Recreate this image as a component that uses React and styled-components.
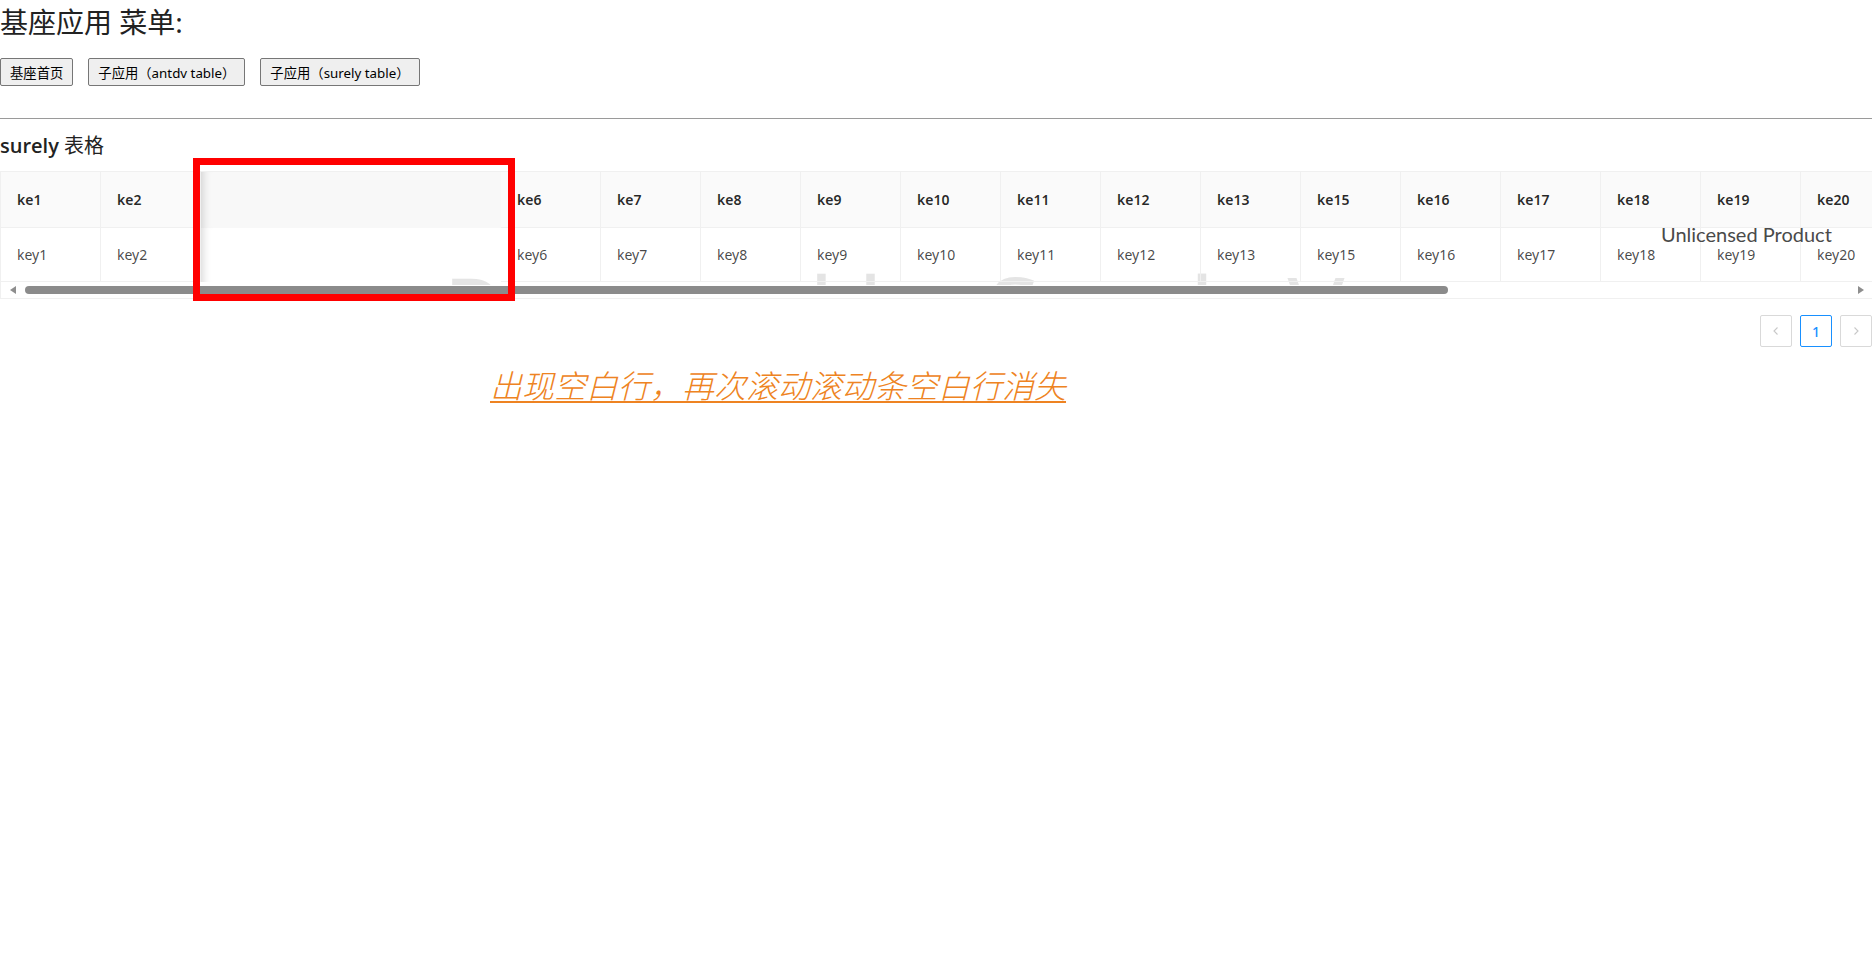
import React from "react";
import styled, { createGlobalStyle } from "styled-components";

const GlobalStyle = createGlobalStyle`
  html, body { margin: 0; padding: 0; background: #fff; }
  body {
    font-family: "Noto Sans", "Noto Sans CJK SC", sans-serif;
    color: #222;
  }
`;

const Page = styled.div`
  position: relative;
  width: 1872px;
  min-height: 958px;
  overflow: hidden;
`;

const Title = styled.h1`
  margin: 0;
  height: 44px;
  font-size: 28px;
  line-height: 44px;
  font-weight: 400;
  color: #222;
  font-family: "Noto Sans", "Noto Sans CJK SC", sans-serif;
`;

const Nav = styled.div`
  display: flex;
  gap: 15px;
  margin-top: 14px;
`;

const NavButton = styled.button`
  height: 28px;
  padding: 0 9px;
  border: 1px solid #767676;
  border-radius: 2px;
  background: #efefef;
  color: #000;
  font-size: 13.33px;
  font-family: "Noto Sans", "Noto Sans CJK SC", sans-serif;
  cursor: pointer;
`;

const Divider = styled.hr`
  margin: 32px 0 0;
  border: 0;
  border-top: 1px solid #9a9a9a;
  height: 0;
`;

const SectionTitle = styled.h3`
  margin: 13px 0 11px;
  height: 28px;
  font-size: 20px;
  line-height: 28px;
  font-weight: 600;
  color: #222;
  font-family: "Open Sans", "Noto Sans CJK SC", sans-serif;
`;

const Plain = styled.span`
  font-weight: 400;
`;

const TableWrap = styled.div`
  position: relative;
  border: 1px solid #f0f0f0;
  border-right: 0;
  overflow: hidden;
`;

const Watermark = styled.div`
  position: absolute;
  left: 442px;
  top: 90px;
  font-size: 95px;
  line-height: 1;
  white-space: nowrap;
  color: #e4e4e4;
  font-family: "Noto Sans", sans-serif;
  z-index: 0;
  pointer-events: none;
`;

const Row = styled.div`
  position: relative;
  z-index: 1;
  display: grid;
  grid-template-columns: 100px 100px 300px repeat(14, 100px);
  width: max-content;
`;

const Cell = styled.div`
  box-sizing: border-box;
  display: flex;
  align-items: center;
  padding: 0 16px;
  height: ${(p) => (p.$head ? "56px" : "54px")};
  background: ${(p) => (p.$head ? "#fafafa" : "transparent")};
  border-right: 1px solid #f0f0f0;
  border-bottom: 1px solid #f0f0f0;
  font-size: 14px;
  font-weight: ${(p) => (p.$head ? 600 : 400)};
  color: ${(p) => (p.$head ? "rgba(0,0,0,0.85)" : "rgba(0,0,0,0.72)")};
  white-space: nowrap;
`;

const GapCell = styled.div`
  box-sizing: border-box;
  height: ${(p) => (p.$head ? "56px" : "54px")};
  background: ${(p) => (p.$head ? "#f8f8f8" : "transparent")};
  box-shadow: inset 10px 0 8px -8px rgba(0, 0, 0, 0.16);
`;

const Scrollbar = styled.div`
  position: relative;
  z-index: 1;
  display: flex;
  align-items: center;
  height: 16px;
  background: linear-gradient(to bottom, transparent 0 3px, #fff 3px);
  padding: 0 8px 0 9px;
`;

const Arrow = styled.span`
  width: 0;
  height: 0;
  border-top: 4px solid transparent;
  border-bottom: 4px solid transparent;
  ${(p) =>
    p.$dir === "left"
      ? "border-right: 6px solid #8e8e8e;"
      : "border-left: 6px solid #8e8e8e;"}
`;

const Track = styled.div`
  flex: 1;
  display: flex;
  align-items: center;
  height: 100%;
`;

const Thumb = styled.div`
  margin-left: 9px;
  width: 1423px;
  height: 8px;
  border-radius: 4px;
  background: #8b8b8b;
`;

const Unlicensed = styled.div`
  position: absolute;
  left: 1660px;
  top: 50px;
  z-index: 2;
  font-size: 20px;
  line-height: 1.2;
  color: #4a4a4a;
  font-family: "Lato", "Noto Sans", sans-serif;
  white-space: nowrap;
`;

const Pagination = styled.div`
  display: flex;
  justify-content: flex-end;
  gap: 8px;
  margin: 16px 0;
`;

const PageBtn = styled.div`
  box-sizing: border-box;
  width: 32px;
  height: 32px;
  display: flex;
  align-items: center;
  justify-content: center;
  border: 1px solid ${(p) => (p.$active ? "#1890ff" : "#d9d9d9")};
  border-radius: 2px;
  background: #fff;
  color: ${(p) => (p.$active ? "#1890ff" : "#c8c8c8")};
  font-size: 14px;
  font-weight: 500;
`;

const Annotation = styled.div`
  margin: 17px 0 0 490px;
  font-size: 32px;
  line-height: 40px;
  font-style: italic;
  text-decoration: underline;
  text-decoration-thickness: 2px;
  text-underline-offset: 3px;
  color: #ee8322;
  font-family: "Noto Sans CJK SC", serif;
  font-weight: 300;
  white-space: nowrap;
`;

const RedBox = styled.div`
  position: absolute;
  left: 193px;
  top: 158px;
  width: 322px;
  height: 143px;
  box-sizing: border-box;
  border: 7px solid #ff0000;
  z-index: 5;
  pointer-events: none;
`;

const Chevron = ({ dir }) => (
  <svg width="10" height="10" viewBox="0 0 10 10" fill="none">
    <path
      d={dir === "left" ? "M6.5 1.5 L3 5 L6.5 8.5" : "M3.5 1.5 L7 5 L3.5 8.5"}
      stroke="currentColor"
      strokeWidth="1.1"
    />
  </svg>
);

const leftCols = ["1", "2"];
const rightCols = ["6", "7", "8", "9", "10", "11", "12", "13", "15", "16", "17", "18", "19", "20"];

export default function App() {
  return (
    <>
      <GlobalStyle />
      <Page>
        <Title>基座应用 菜单:</Title>
        <Nav>
          <NavButton>基座首页</NavButton>
          <NavButton>子应用（antdv table）</NavButton>
          <NavButton>子应用（surely table）</NavButton>
        </Nav>
        <Divider />
        <SectionTitle>
          surely <Plain>表格</Plain>
        </SectionTitle>
        <TableWrap>
          <Watermark>Powered by Surely Vue</Watermark>
          <Row>
            {leftCols.map((c) => (
              <Cell $head key={c}>ke{c}</Cell>
            ))}
            <GapCell $head />
            {rightCols.map((c) => (
              <Cell $head key={c}>ke{c}</Cell>
            ))}
          </Row>
          <Row>
            {leftCols.map((c) => (
              <Cell key={c}>key{c}</Cell>
            ))}
            <GapCell />
            {rightCols.map((c) => (
              <Cell key={c}>key{c}</Cell>
            ))}
          </Row>
          <Scrollbar>
            <Arrow $dir="left" />
            <Track>
              <Thumb />
            </Track>
            <Arrow $dir="right" />
          </Scrollbar>
          <Unlicensed>Unlicensed Product</Unlicensed>
        </TableWrap>
        <Pagination>
          <PageBtn>
            <Chevron dir="left" />
          </PageBtn>
          <PageBtn $active>1</PageBtn>
          <PageBtn>
            <Chevron dir="right" />
          </PageBtn>
        </Pagination>
        <Annotation>出现空白行，再次滚动滚动条空白行消失</Annotation>
        <RedBox />
      </Page>
    </>
  );
}
